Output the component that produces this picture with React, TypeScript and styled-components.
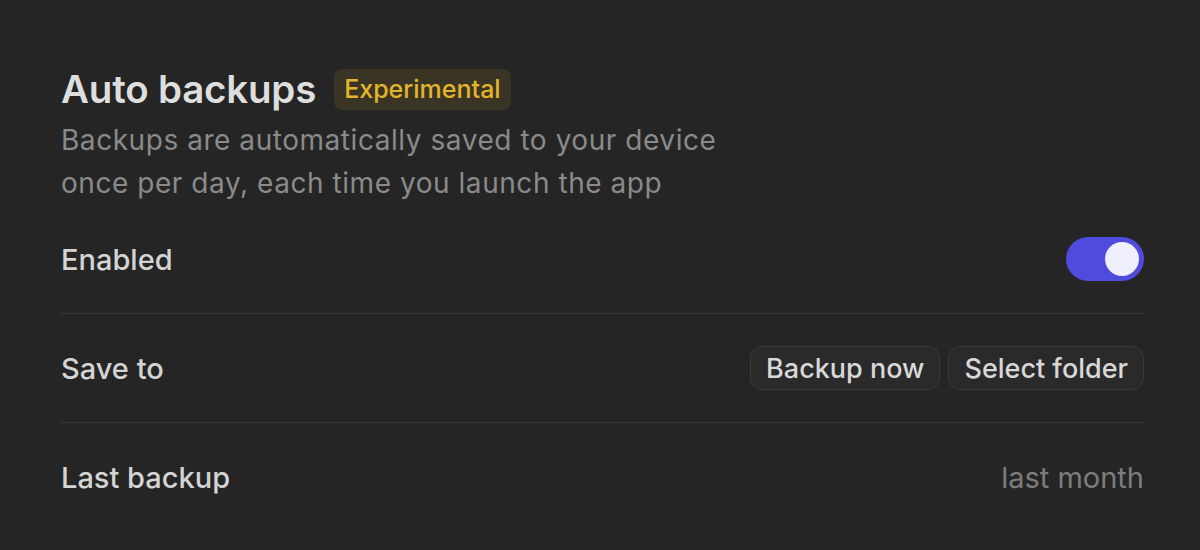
import React, { useState } from 'react'
import styled, { createGlobalStyle } from 'styled-components'

const GlobalStyle = createGlobalStyle`
  html, body {
    margin: 0;
    padding: 0;
    background: #252525;
  }
  body {
    font-family: Inter, "Noto Sans", sans-serif;
    -webkit-font-smoothing: antialiased;
  }
`

const Page = styled.div`
  width: 1200px;
  height: 550px;
  box-sizing: border-box;
  padding: 66px 56px 0 61px;
  background: #252525;
`

const Header = styled.div`
  display: flex;
  align-items: center;
  gap: 18px;
`

const Title = styled.h1`
  margin: 0;
  font-size: 38.5px;
  font-weight: 600;
  color: #dedede;
  letter-spacing: -0.2px;
`

const Badge = styled.span`
  display: inline-flex;
  align-items: center;
  height: 41px;
  padding: 0 10px;
  border-radius: 8px;
  background: #3a3424;
  color: #e2b52c;
  font-size: 25px;
  font-weight: 500;
`

const Description = styled.p`
  margin: 7px 0 0;
  font-size: 28px;
  letter-spacing: 0.55px;
  line-height: 43px;
  color: #8a8a8a;
  max-width: 720px;
`

const Row = styled.div<{ $divider?: boolean }>`
  display: flex;
  align-items: center;
  justify-content: space-between;
  height: 108px;
  border-top: ${p => (p.$divider ? '1px solid #363636' : 'none')};
`

const Label = styled.span`
  font-size: 29px;
  font-weight: 500;
  color: #d4d4d4;
`

const Value = styled.span`
  font-size: 29px;
  color: #7d7d7d;
`

const Actions = styled.div`
  display: flex;
  gap: 8px;
`

const Button = styled.button`
  height: 44px;
  padding: 0 15px;
  border-radius: 12px;
  border: 1.5px solid #3a3a3a;
  background: #2a2a2a;
  color: #d8d8d8;
  font-family: inherit;
  font-size: 27px;
  font-weight: 500;
  cursor: pointer;
`

const Track = styled.button<{ $on: boolean }>`
  position: relative;
  width: 78px;
  height: 44px;
  border: none;
  padding: 0;
  border-radius: 22px;
  background: ${p => (p.$on ? '#4f4cdd' : '#444')};
  cursor: pointer;
`

const Knob = styled.span<{ $on: boolean }>`
  position: absolute;
  top: 5px;
  left: ${p => (p.$on ? '39px' : '5px')};
  width: 34px;
  height: 34px;
  border-radius: 50%;
  background: #efeffd;
  transition: left 0.15s;
`

export default function App() {
  const [enabled, setEnabled] = useState(true)

  return (
    <>
      <GlobalStyle />
      <Page>
        <Header>
          <Title>Auto backups</Title>
          <Badge>Experimental</Badge>
        </Header>
        <Description>
          Backups are automatically saved to your device once per day, each time you launch the app
        </Description>
        <Row>
          <Label>Enabled</Label>
          <Track $on={enabled} onClick={() => setEnabled(!enabled)}>
            <Knob $on={enabled} />
          </Track>
        </Row>
        <Row $divider>
          <Label>Save to</Label>
          <Actions>
            <Button>Backup now</Button>
            <Button>Select folder</Button>
          </Actions>
        </Row>
        <Row $divider>
          <Label>Last backup</Label>
          <Value>last month</Value>
        </Row>
      </Page>
    </>
  )
}
